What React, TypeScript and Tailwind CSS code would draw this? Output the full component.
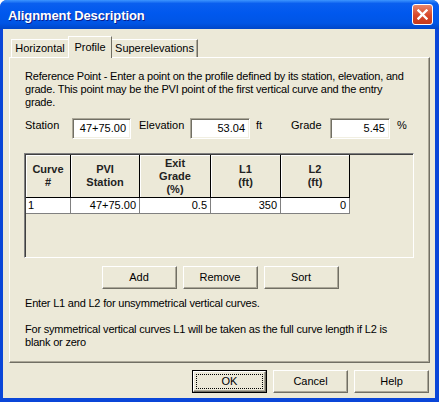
import React from "react";

const font = "font-['Liberation_Sans',Arial,sans-serif]";

const RaisedButton = ({ label, focused }: { label: string; focused?: boolean }) => {
    if (focused) {
        return (
            <div className="w-[75px] h-[23px] border border-black bg-[#ECE9D8]">
                <div className="w-full h-full border border-t-white border-l-white border-b-[#716F64] border-r-[#716F64] shadow-[inset_-1px_-1px_0_#ACA899] p-[2px]">
                    <div className="w-full h-full border border-dotted border-black flex items-center justify-center text-[11px]">
                        {label}
                    </div>
                </div>
            </div>
        );
    }
    return (
        <div className="w-[75px] h-[23px] border border-t-white border-l-white border-b-[#716F64] border-r-[#716F64] shadow-[inset_-1px_-1px_0_#ACA899] bg-[#ECE9D8] flex items-center justify-center text-[11px]">
            {label}
        </div>
    );
};

const Field = ({ value, width }: { value: string; width: string }) => (
    <div
        className={`${width} h-[21px] border border-t-[#ACA899] border-l-[#ACA899] border-b-white border-r-white shadow-[inset_1px_1px_0_#716F64,inset_-1px_-1px_0_#F1EFE2] bg-white text-right pr-[4px] pt-[3px] text-[11px] leading-[13px]`}
    >
        {value}
    </div>
);

const HeaderCell = ({ lines, width }: { lines: string[]; width: string }) => (
    <div
        className={`${width} h-[43px] border-r border-b border-black shadow-[inset_1px_1px_0_white] flex flex-col items-center justify-center text-[11px] leading-[13px] font-bold text-[#222]`}
    >
        {lines.map((l) => (
            <span key={l}>{l}</span>
        ))}
    </div>
);

const BodyCell = ({ value, width, left }: { value: string; width: string; left?: boolean }) => (
    <div
        className={`${width} h-[16px] border-r border-b border-[#808080] bg-white text-[11px] leading-[14px] ${left ? "text-left pl-[2px]" : "text-right pr-[3px]"}`}
    >
        {value}
    </div>
);

export default function App() {
    return (
        <div className={`w-[439px] h-[402px] flex flex-col bg-[#0A46D8] rounded-t-[7px] overflow-hidden text-black ${font}`}>
            {/* title bar */}
            <div className="h-[29px] shrink-0 flex items-center justify-between pl-[8px] pr-[6px] bg-[linear-gradient(to_bottom,#3D95FF_0%,#0A5FEF_12%,#0058EE_45%,#0055E5_80%,#0046C8_100%)]">
                <span className="text-white font-bold text-[13px] tracking-[-0.1px] mt-[2px] [text-shadow:1px_1px_0_#0A1E8C]">
                    Alignment Description
                </span>
                <div className="w-[21px] h-[21px] rounded-[3px] border border-white bg-[linear-gradient(to_bottom,#E8866A,#D8482A_55%,#C5391C)] flex items-center justify-center">
                    <svg width="11" height="11" viewBox="0 0 11 11">
                        <path d="M1.5 1.5 L9.5 9.5 M9.5 1.5 L1.5 9.5" stroke="white" strokeWidth="2.4" strokeLinecap="square" />
                    </svg>
                </div>
            </div>

            {/* window body */}
            <div className="flex-1 ml-[3px] mr-[4px] mb-[4px] bg-[#ECE9D8] flex flex-col pl-[6px] pr-[5px] pt-[7px]">
                {/* tabs */}
                <div className="flex items-end h-[21px] pl-[2px] text-[11px]">
                    <div className="w-[58px] h-[18px] border border-b-0 border-t-white border-l-white border-r-[#716F64] flex items-center justify-center">
                        Horizontal
                    </div>
                    <div className="relative z-10 -mb-px w-[44px] h-[22px] border border-b-0 border-t-white border-l-white border-r-[#716F64] bg-[#ECE9D8] flex items-start justify-center pt-[2px] -ml-px">
                        Profile
                    </div>
                    <div className="w-[86px] h-[18px] border border-b-0 border-l-0 border-t-white border-r-[#716F64] shadow-[inset_-1px_0_0_#ACA899] flex items-center justify-center">
                        Superelevations
                    </div>
                </div>

                {/* tab panel */}
                <div className="h-[306px] border border-t-white border-l-white border-r-[#716F64] border-b-[#716F64] shadow-[inset_-1px_-1px_0_#ACA899] pl-[15px] pt-[12px] text-[11px] leading-[13px]">
                    <p className="tracking-[-0.2px]">
                        Reference Point - Enter a point on the profile defined by its station, elevation, and
                        <br />
                        grade. This point may be the PVI point of the first vertical curve and the entry
                        <br />
                        grade.
                    </p>

                    <div className="flex items-start mt-[9px]">
                        <span className="w-[47px] pt-[1px]">Station</span>
                        <Field value="47+75.00" width="w-[59px]" />
                        <span className="ml-[8px] w-[51px] pt-[1px]">Elevation</span>
                        <Field value="53.04" width="w-[60px]" />
                        <span className="ml-[6px] w-[35px] pt-[1px]">ft</span>
                        <span className="w-[39px] pt-[1px]">Grade</span>
                        <Field value="5.45" width="w-[60px]" />
                        <span className="ml-[7px] pt-[1px]">%</span>
                    </div>

                    {/* grid */}
                    <div className="-ml-px mt-[14px] w-[390px] h-[105px] border border-t-[#808080] border-l-[#808080] border-b-white border-r-white shadow-[inset_1px_1px_0_#404040] pl-[1px] pt-[1px]">
                        <div className="flex">
                            <HeaderCell lines={["Curve", "#"]} width="w-[45px]" />
                            <HeaderCell lines={["PVI", "Station"]} width="w-[69px]" />
                            <HeaderCell lines={["Exit", "Grade", "(%)"]} width="w-[71px]" />
                            <HeaderCell lines={["L1", "(ft)"]} width="w-[70px]" />
                            <HeaderCell lines={["L2", "(ft)"]} width="w-[69px]" />
                        </div>
                        <div className="flex">
                            <BodyCell value="1" width="w-[45px]" left />
                            <BodyCell value="47+75.00" width="w-[69px]" />
                            <BodyCell value="0.5" width="w-[71px]" />
                            <BodyCell value="350" width="w-[70px]" />
                            <BodyCell value="0" width="w-[69px]" />
                        </div>
                    </div>

                    <div className="flex justify-center gap-[6px] mt-[8px] pr-[14px]">
                        <RaisedButton label="Add" />
                        <RaisedButton label="Remove" />
                        <RaisedButton label="Sort" />
                    </div>

                    <p className="mt-[8px] tracking-[-0.2px]">Enter L1 and L2 for unsymmetrical vertical curves.</p>
                    <p className="mt-[13px] tracking-[-0.2px]">
                        For symmetrical vertical curves L1 will be taken as the full curve length if L2 is
                        <br />
                        blank or zero
                    </p>
                </div>

                {/* dialog buttons */}
                <div className="flex justify-end gap-[6px] mt-[7px] pr-[1px]">
                    <RaisedButton label="OK" focused />
                    <RaisedButton label="Cancel" />
                    <RaisedButton label="Help" />
                </div>
            </div>
        </div>
    );
}
